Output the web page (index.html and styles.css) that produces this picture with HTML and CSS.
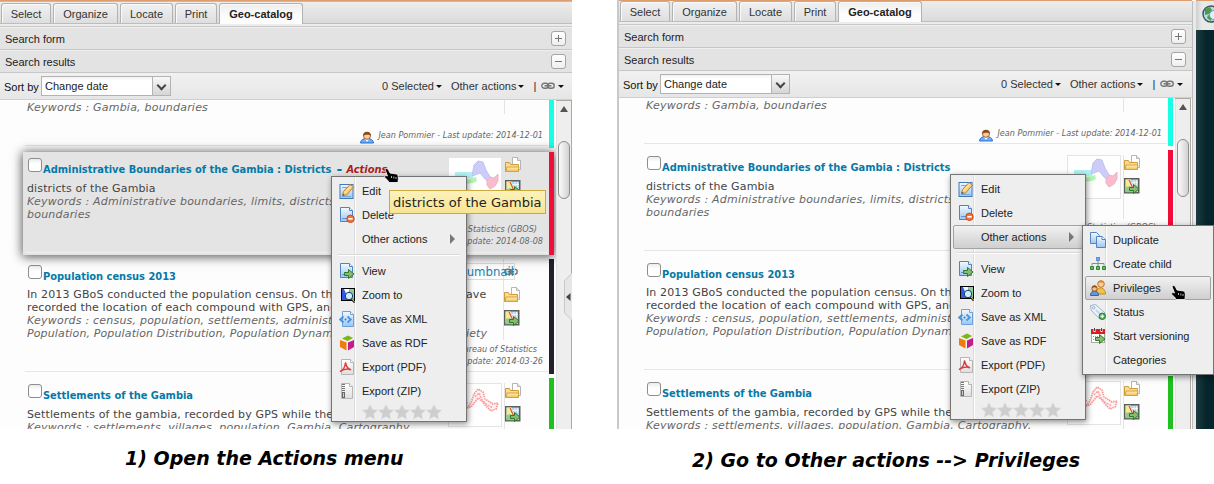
FILE: index.html
```html
<!DOCTYPE html>
<html lang="en">
<head>
<meta charset="utf-8">
<title>Geo-catalog: Actions menu</title>
<link rel="stylesheet" href="styles.css">
</head>
<body>
<svg class="sprite" aria-hidden="true">
  <defs>
    <linearGradient id="gPage" x1="0" y1="0" x2="0" y2="1"><stop offset="0" stop-color="#f4f9ff"/><stop offset="1" stop-color="#9cc6f2"/></linearGradient>
    <linearGradient id="gGrey" x1="0" y1="0" x2="0" y2="1"><stop offset="0" stop-color="#fff"/><stop offset="1" stop-color="#dedede"/></linearGradient>
    <linearGradient id="gFold" x1="0" y1="0" x2="0" y2="1"><stop offset="0" stop-color="#fff3bf"/><stop offset="1" stop-color="#efbf52"/></linearGradient>
  </defs>
  <symbol id="page" viewBox="0 0 16 16"><path d="M1.500.5h9l3 3v11h-12z" fill="url(#gPage)" stroke="#4f83c1"/><path d="M10.500.5v3h3" fill="#fff" stroke="#4f83c1"/><path d="M3 11.500h9" stroke="#5f95d2"/></symbol>
  <symbol id="arrow" viewBox="0 0 16 16"><path d="M5.500 9.500h4v-3l5.500 4.500-5.500 4.500v-3h-4z" fill="#86bd6c" stroke="#2f7a2a"/></symbol>
  <symbol id="edit" viewBox="0 0 16 16"><rect x="1" y="1.500" width="13" height="14" fill="url(#gPage)" stroke="#3f78bd"/><path d="M3 4.500h8M3 13.500h9" stroke="#78a9dd"/><path d="M3.500 12.500l1-4L11 1.500l3.500 2.500-7 8z" fill="#f8cf7c" stroke="#c08038"/><path d="M5.500 10l6.500-7" stroke="#fff0b4"/><path d="M3.500 12.800l.6-2 1.500 1.300z" fill="#444"/></symbol>
  <symbol id="delete" viewBox="0 0 16 16"><use href="#page"/><circle cx="11.500" cy="11.800" r="3.700" fill="#ee7440" stroke="#c84a1a"/><path d="M9.300 11.800h4.400" stroke="#fff" stroke-width="1.600"/></symbol>
  <symbol id="view" viewBox="0 0 16 16"><use href="#page"/><use href="#arrow"/></symbol>
  <symbol id="zoom" viewBox="0 0 16 16"><rect x="2.500" y="1.500" width="13" height="12" fill="#3557e2" stroke="#000"/><path d="M5 2h6L8 9z" fill="#fff"/><path d="M10 2h5v11h-3z" fill="#8fce9a"/><circle cx="10" cy="9" r="3.700" fill="#cdeffa" stroke="#123f66"/><path d="M12.500 12l3.300 3.500" stroke="#222" stroke-width="2"/><path d="M13 12l2.500 2.700" stroke="#e8bd3a"/></symbol>
  <symbol id="xml" viewBox="0 0 16 16"><path d="M3.500.5h8l3 3v12h-11z" fill="url(#gPage)" stroke="#6ba2de"/><path d="M11.500.5v3h3" fill="#fff" stroke="#6ba2de"/><path d="M4.500 5.500L1.200 8.500l3.300 3M8.500 5.500l3.300 3-3.300 3" fill="none" stroke="#4a93dc" stroke-width="1.800"/><circle cx="6.500" cy="8.500" r="1" fill="#2f7fd0"/></symbol>
  <symbol id="rdf" viewBox="0 0 16 16"><path d="M3 3.500l6-3 5 2.500-5.500 3z" fill="#7cb518"/><path d="M1 5l6.500 2.500v8L1 12z" fill="#f07c0c"/><path d="M9 7.500L15 5v7l-6 3.500z" fill="#c41c8c"/></symbol>
  <symbol id="pdf" viewBox="0 0 16 16"><path d="M2.500.5h9l3 3v12h-12z" fill="url(#gGrey)" stroke="#b5b5b5"/><path d="M11.500.5v3h3" fill="#fff" stroke="#b5b5b5"/><path d="M1 12.500c3-1 5-4.500 5.500-9 1 5 3 7 5.500 7.200-3-1.200-7-.6-11 1.800z" fill="none" stroke="#df3a3a" stroke-width="1.400"/></symbol>
  <symbol id="zip" viewBox="0 0 16 16"><path d="M2.500.5h8l3 3v12h-11z" fill="url(#gGrey)" stroke="#b5b5b5"/><path d="M10.500.5v3h3" fill="#fff" stroke="#b5b5b5"/><path d="M4.500 1v9" stroke="#777" stroke-width="3" stroke-dasharray="1 1"/><rect x="3.500" y="9.500" width="2" height="5" fill="#ccc" stroke="#666"/></symbol>
  <symbol id="copy" viewBox="0 0 16 16"><path d="M.5.500h6l3 3v8h-9z" fill="url(#gPage)" stroke="#4f83c1"/><path d="M6.500 4.500h5.500l3.500 3v8h-9z" fill="url(#gPage)" stroke="#4f83c1"/><path d="M12 4.500v3h3.500" fill="#fff" stroke="#4f83c1"/></symbol>
  <symbol id="tree" viewBox="0 0 16 16"><rect x="6.500" y="1.500" width="3" height="3" fill="#6da5e6" stroke="#6094d8"/><path d="M8 5v5M2 9.500V7.500h12v2" fill="none" stroke="#8a8a8a"/><path d="M.5 10.500h3v3h-3zM6.500 10.500h3v3h-3zM12.500 10.500h3v3h-3z" fill="#66b866" stroke="#2b8a2b"/></symbol>
  <symbol id="people" viewBox="0 0 16 16"><path d="M6 14c0-4 2-6 4.500-6s5 2 5 6z" fill="#f2c24a" stroke="#c08a22"/><circle cx="11" cy="4" r="3.300" fill="#f8cf9c" stroke="#b9752b"/><path d="M7.800 3.500C8-.5 14-.5 14.200 3.500 12.500 2 9.500 2 7.800 3.500z" fill="#d98d2b"/><path d="M.5 15.500c0-3 1.500-4.500 4-4.500s4 1.500 4 4.500z" fill="#5f98dc" stroke="#3465a4"/><circle cx="4.500" cy="8.500" r="2.700" fill="#f3c08d" stroke="#9b5a25"/><path d="M2 8C2 4.500 7 4.500 7 8 5.500 7 3.500 7 2 8z" fill="#8c4a1c"/></symbol>
  <symbol id="tag" viewBox="0 0 16 16"><path d="M.5 1.500L5.500.500 15 9l-5.500 6L1 6z" fill="#e9f2fc" stroke="#9fb3cc"/><circle cx="3.700" cy="3.700" r="1.200" fill="#fff" stroke="#92a8c4"/><path d="M6 6l4 4" stroke="#c7d7ea" stroke-width="2"/><circle cx="12.300" cy="12.300" r="3.200" fill="#5fb566" stroke="#24782c"/><path d="M10.500 12.300H14M12.300 10.500V14" stroke="#fff"/></symbol>
  <symbol id="cal" viewBox="0 0 16 16"><rect x="1.500" y="1.500" width="13" height="13" fill="#fff" stroke="#aaa"/><path d="M1 1h14v5H1z" fill="#df1c1c"/><path d="M4.500 0v4M11.500 0v4" stroke="#fff" stroke-width="2"/><path d="M4.500 0v3M11.500 0v3" stroke="#444"/><path d="M3 8.500h5M3 11.500h3" stroke="#999" stroke-dasharray="1 1"/><use href="#arrow"/></symbol>
  <symbol id="folder" viewBox="0 0 16 16"><path d="M7.500.5h5l3 3v9h-8z" fill="#fff" stroke="#b5b5b5"/><path d="M12.500.5v3h3" fill="#eee" stroke="#b5b5b5"/><path d="M.5 14.500v-9h4l1 2h8v7z" fill="#f8dc92" stroke="#cf9a3a"/><path d="M1 14.500l1-4.500h12l-1 4.500z" fill="url(#gFold)" stroke="#d7a03f"/></symbol>
  <symbol id="map" viewBox="0 0 16 16"><rect x=".75" y=".75" width="14" height="14" fill="#b3d3ee" stroke="#5b6058" stroke-width="1.500"/><path d="M1.500 1.500h4.500l1 6-5.500 5z" fill="#f2ec8a"/><path d="M1.500 9l5-1 3 6.200h-8z" fill="#93c98c"/><path d="M5 2l5 11" stroke="#fff" stroke-width="2.600"/><path d="M5 2l4 8.500" stroke="#e0602c" stroke-width="1.500"/><path d="M10 2v5M12.500 2v5M8 4.500h6" stroke="#fff" stroke-width=".7"/><use href="#arrow"/></symbol>
  <symbol id="user" viewBox="0 0 14 13"><path d="M.5 12c.5-3.500 3-4.500 6.500-4.500s6 1 6.500 4.500z" fill="#6cb0fb" stroke="#2b6fd4"/><path d="M5 8l2 3 2-3z" fill="#fff"/><circle cx="7" cy="4.800" r="3.500" fill="#f8cfa0" stroke="#a8662c"/><path d="M3 5C2.800-.8 11.200-.8 11 5 9.500 3 5 3.500 3 5z" fill="#8f4a17"/></symbol>
  <symbol id="link" viewBox="0 0 14 8"><rect x=".8" y="1.300" width="6.500" height="5" rx="2.500" fill="none" stroke="#777" stroke-width="1.400"/><rect x="6.700" y="1.300" width="6.500" height="5" rx="2.500" fill="none" stroke="#777" stroke-width="1.400"/><path d="M3.500 3.800h7" stroke="#777" stroke-width="1.500"/></symbol>
  <symbol id="hand" viewBox="0 0 15 16"><path d="M1 1.500C2-.2 4 .5 4.500 2l1.500 3 6.500 1c1.200.5 2 2 1.800 4.500L14 14.500H5L3.500 12 .700 9.500C0 8 1.500 7 3.500 8z" fill="#000" stroke="#fff" stroke-width=".8"/><path d="M7.500 8v2M9.800 8.500v2M12 9v2" stroke="#ddd" stroke-width=".8"/></symbol>
  <symbol id="star" viewBox="0 0 16 16"><path d="M8 .8l2.200 4.800 5.300.600-4 3.600 1.100 5.200L8 12.400 3.400 15l1.100-5.200-4-3.600 5.300-.6z" fill="#cecece" stroke="#d9d9d9" stroke-width=".6"/></symbol>
  <symbol id="thumbA" viewBox="0 0 52 42"><path d="M6 14h19l-1 6-18 1z" fill="#b0f2f4"/><path d="M9 23l14-3 4-1 1 4-4 2-8 1-6-1z" fill="#b4f5b4"/><path d="M23 18l2-11 4-4 5 1 3 8 3 5 4 6-3 2-5-4-5-6-5 2z" fill="#ccccf8" stroke="#c2c2f2"/><path d="M38 22l3-3 4 1 4-4v7l-3 5-5 3-3-4z" fill="#f8bccf" stroke="#f3b0c6"/></symbol>
  <symbol id="thumbB" viewBox="0 0 52 42"><path d="M18 24l4-5 3-9 4-5 5 3 2 7 5 3 3 2 5-1-2 6-5 2-5-5-4-5-4-3-3 4-4 5z" fill="#fff3f3" stroke="#f99a9a" stroke-width="1.800" stroke-dasharray="1.500 .8"/><path d="M4 22l7-4 8 1M5 25l8-3 7 1" fill="none" stroke="#f9abab" stroke-width="1.500" stroke-dasharray="2 1"/><path d="M26 13l4-4 3 7 5 5 6 3" fill="none" stroke="#f9a4a4" stroke-width="1.500" stroke-dasharray="2 1"/></symbol>
</svg>

<main class="steps">
<section class="step">
  <div class="shot shot-a">
    <div class="catalog">
      <div class="wood"></div>
      <nav class="tabs"><span class="tab t-select">Select</span><span class="tab t-organize">Organize</span><span class="tab t-locate">Locate</span><span class="tab t-print">Print</span><span class="tab active">Geo-catalog</span></nav>
      <div class="gutter"></div>
      <div class="section">Search form<i class="toggle plus"></i></div>
      <div class="section">Search results<i class="toggle"></i></div>
      <div class="toolbar"><label>Sort by</label><span class="select">Change date<i class="trigger"></i></span><span class="tool selected">0 Selected</span><span class="tool other">Other actions</span><b class="pipe">|</b><span class="tool links"><svg width="14" height="8"><use href="#link"/></svg></span></div>
      <div class="results">
        <div class="list">
          <article class="item cyan first">
            <div class="top"><div class="main"><p class="kw">Keywords : Gambia, boundaries</p></div><div class="tools"></div></div>
            <div class="meta"><svg width="14" height="13"><use href="#user"/></svg><span>Jean Pommier - Last update: 2014-12-01</span></div>
          </article>
          <article class="item red hover">
            <div class="top"><div class="main"><h3><i class="check"></i><span>Administrative Boundaries of the Gambia : Districts</span><b class="dash">-</b><em>Actions</em></h3><p>districts of the Gambia</p><p class="kw">Keywords : Administrative boundaries, limits, districts,<br>boundaries</p></div><svg class="thumb" width="54" height="44"><use href="#thumbA"/></svg><div class="tools"><svg width="16" height="16"><use href="#folder"/></svg><svg width="16" height="16"><use href="#map"/></svg></div></div>
            <div class="meta two"><span class="org">Bureau of Statistics (GBOS)</span><span>Last update: 2014-08-08</span></div>
          </article>
          <article class="item black">
            <div class="top"><div class="main wide"><h3><i class="check"></i><span>Population census 2013</span></h3><p class="split"><span>In 2013 GBoS conducted the population census. On the</span><span>ave</span></p><p>recorded the location of each compound with GPS, and</p><p class="kw">Keywords : census, population, settlements, administra</p><p class="kw tight split"><span>Population, Population Distribution, Population Dynamic</span><span>iety</span></p></div><div class="tools with-link"><svg class="lk" width="14" height="8"><use href="#link"/></svg><svg width="16" height="16"><use href="#folder"/></svg><svg width="16" height="16"><use href="#map"/></svg></div></div>
            <span class="alt">thumbnail</span>
            <div class="meta two"><span class="org">Bureau of Statistics</span><span>Last update: 2014-03-26</span></div>
          </article>
          <article class="item green">
            <div class="top"><div class="main"><h3><i class="check"></i><span>Settlements of the Gambia</span></h3><p>Settlements of the gambia, recorded by GPS while the</p><p class="kw">Keywords : settlements, villages, population, Gambia, Cartography,</p></div><svg class="thumb" width="54" height="44"><use href="#thumbB"/></svg><div class="tools"><svg width="16" height="16"><use href="#folder"/></svg><svg width="16" height="16"><use href="#map"/></svg></div></div>
          </article>
        </div>
        <div class="scroll"><i class="up"></i><i class="handle"></i></div>
      </div>
    </div>
    <svg class="collapse" width="9" height="50" viewBox="0 0 9 50"><path d="M9 0L.5 9v32L9 49z" fill="#e6e6e6" stroke="#c9c9c9"/><path d="M6.500 21v8L2 25z" fill="#444"/></svg>
    <div class="menu actions">
      <div class="entry"><svg width="16" height="16"><use href="#edit"/></svg>Edit</div>
      <div class="entry"><svg width="16" height="16"><use href="#delete"/></svg>Delete</div>
      <div class="entry parent"><i class="blank"></i>Other actions</div>
      <hr>
      <div class="entry"><svg width="16" height="16"><use href="#view"/></svg>View</div>
      <div class="entry"><svg width="16" height="16"><use href="#zoom"/></svg>Zoom to</div>
      <div class="entry"><svg width="16" height="16"><use href="#xml"/></svg>Save as XML</div>
      <div class="entry"><svg width="16" height="16"><use href="#rdf"/></svg>Save as RDF</div>
      <div class="entry"><svg width="16" height="16"><use href="#pdf"/></svg>Export (PDF)</div>
      <div class="entry"><svg width="16" height="16"><use href="#zip"/></svg>Export (ZIP)</div>
      <div class="stars"><svg width="16" height="16"><use href="#star"/></svg><svg width="16" height="16"><use href="#star"/></svg><svg width="16" height="16"><use href="#star"/></svg><svg width="16" height="16"><use href="#star"/></svg><svg width="16" height="16"><use href="#star"/></svg></div>
    </div>
    <div class="tooltip">districts of the Gambia</div>
    <svg class="cursor c-a" width="15" height="16"><use href="#hand"/></svg>
  </div>
  <p class="caption cap-a">1) Open the Actions menu</p>
</section>

<section class="step">
  <div class="shot shot-b">
    <div class="catalog">
      <div class="wood"></div>
      <nav class="tabs"><span class="tab t-select">Select</span><span class="tab t-organize">Organize</span><span class="tab t-locate">Locate</span><span class="tab t-print">Print</span><span class="tab active">Geo-catalog</span></nav>
      <div class="gutter"></div>
      <div class="section">Search form<i class="toggle plus"></i></div>
      <div class="section">Search results<i class="toggle"></i></div>
      <div class="toolbar"><label>Sort by</label><span class="select">Change date<i class="trigger"></i></span><span class="tool selected">0 Selected</span><span class="tool other">Other actions</span><b class="pipe">|</b><span class="tool links"><svg width="14" height="8"><use href="#link"/></svg></span></div>
      <div class="results">
        <div class="list">
          <article class="item cyan first">
            <div class="top"><div class="main"><p class="kw">Keywords : Gambia, boundaries</p></div><div class="tools"></div></div>
            <div class="meta"><svg width="14" height="13"><use href="#user"/></svg><span>Jean Pommier - Last update: 2014-12-01</span></div>
          </article>
          <article class="item red">
            <div class="top"><div class="main"><h3><i class="check"></i><span>Administrative Boundaries of the Gambia : Districts</span></h3><p>districts of the Gambia</p><p class="kw">Keywords : Administrative boundaries, limits, districts,<br>boundaries</p></div><svg class="thumb" width="54" height="44"><use href="#thumbA"/></svg><div class="tools"><svg width="16" height="16"><use href="#folder"/></svg><svg width="16" height="16"><use href="#map"/></svg></div></div>
            <div class="meta two"><span class="org">Bureau of Statistics (GBOS)</span><span>Last update: 2014-08-08</span></div>
          </article>
          <article class="item black">
            <div class="top"><div class="main wide"><h3><i class="check"></i><span>Population census 2013</span></h3><p>In 2013 GBoS conducted the population census. On the</p><p>recorded the location of each compound with GPS, and</p><p class="kw">Keywords : census, population, settlements, administra</p><p class="kw tight">Population, Population Distribution, Population Dynamic</p></div></div>
          </article>
          <article class="item green">
            <div class="top"><div class="main"><h3><i class="check"></i><span>Settlements of the Gambia</span></h3><p>Settlements of the gambia, recorded by GPS while the</p><p class="kw">Keywords : settlements, villages, population, Gambia, Cartography,</p></div><svg class="thumb" width="54" height="44"><use href="#thumbB"/></svg><div class="tools"><svg width="16" height="16"><use href="#folder"/></svg><svg width="16" height="16"><use href="#map"/></svg></div></div>
          </article>
        </div>
        <div class="scroll"><i class="up"></i><i class="handle"></i></div>
      </div>
    </div>
    <div class="splitter"></div>
    <div class="mapside"><div class="maptools"><svg width="18" height="18" viewBox="0 0 18 18"><circle cx="9" cy="9" r="8" fill="#b9dcea" stroke="#345a5a" stroke-width="1.500"/><path d="M3 4l5-2 2 3-3 4-4 1zM6 10l4 2-1 4-4-3z" fill="#4f9a4a"/><circle cx="12" cy="10" r="4.500" fill="#d9f3fd" stroke="#5aa0c0"/></svg></div></div>
    <div class="menu actions">
      <div class="entry"><svg width="16" height="16"><use href="#edit"/></svg>Edit</div>
      <div class="entry"><svg width="16" height="16"><use href="#delete"/></svg>Delete</div>
      <div class="entry parent on"><i class="blank"></i>Other actions</div>
      <hr>
      <div class="entry"><svg width="16" height="16"><use href="#view"/></svg>View</div>
      <div class="entry"><svg width="16" height="16"><use href="#zoom"/></svg>Zoom to</div>
      <div class="entry"><svg width="16" height="16"><use href="#xml"/></svg>Save as XML</div>
      <div class="entry"><svg width="16" height="16"><use href="#rdf"/></svg>Save as RDF</div>
      <div class="entry"><svg width="16" height="16"><use href="#pdf"/></svg>Export (PDF)</div>
      <div class="entry"><svg width="16" height="16"><use href="#zip"/></svg>Export (ZIP)</div>
      <div class="stars"><svg width="16" height="16"><use href="#star"/></svg><svg width="16" height="16"><use href="#star"/></svg><svg width="16" height="16"><use href="#star"/></svg><svg width="16" height="16"><use href="#star"/></svg><svg width="16" height="16"><use href="#star"/></svg></div>
    </div>
    <div class="menu submenu">
      <div class="entry"><svg width="16" height="16"><use href="#copy"/></svg>Duplicate</div>
      <div class="entry"><svg width="16" height="16"><use href="#tree"/></svg>Create child</div>
      <div class="entry on"><svg width="16" height="16"><use href="#people"/></svg>Privileges</div>
      <div class="entry"><svg width="16" height="16"><use href="#tag"/></svg>Status</div>
      <div class="entry"><svg width="16" height="16"><use href="#cal"/></svg>Start versioning</div>
      <div class="entry"><i class="blank"></i>Categories</div>
    </div>
    <svg class="cursor c-b" width="15" height="16"><use href="#hand"/></svg>
  </div>
  <p class="caption cap-b">2) Go to Other actions --&gt; Privileges</p>
</section>
</main>
</body>
</html>
```
FILE: styles.css
```css
* { box-sizing: border-box; }
body { margin: 0; background: #fff; color: #222; font: 11px/14px "Liberation Sans", Arial, sans-serif; overflow: hidden; }
svg { display: block; flex: none; }
p, h3 { margin: 0; }
i { font-style: normal; }
.sprite { position: absolute; width: 0; height: 0; }

.steps { display: flex; gap: 45px; width: 1214px; height: 484px; }
.step { flex: none; }
.shot { position: relative; height: 429px; overflow: hidden; display: flex; }
.shot-a { width: 572px; }
.shot-b { width: 597px; }
.shot-b .catalog { border-left: 2px solid #c9c9c9; width: 575px; }
.catalog { display: flex; flex-direction: column; width: 572px; height: 429px; white-space: nowrap; }

.wood { height: 2px; flex: none; background: linear-gradient(#dc9e6e 50%, #d0b8a4 50%); }
.shot-b .wood { height: 1px; background: #dc9e6e; }

.tabs { display: flex; align-items: flex-end; gap: 2px; height: 22px; flex: none; padding-left: 1px; border-bottom: 1px solid #bdbdbd; background: linear-gradient(#ededed, #dadada); }
.shot-b .tabs { height: 21px; }
.tab { height: 20px; padding-top: 3px; text-align: center; border: 1px solid #b2b2b2; border-bottom: 0; border-radius: 3px 3px 0 0; background: linear-gradient(#f1f1f1, #dedede); color: #333; box-shadow: inset 1px 1px #fafafa; }
.t-select { width: 50px; }
.t-organize { width: 65px; }
.t-locate { width: 53px; }
.t-print { width: 42px; }
.tab.active { width: 84px; height: 21px; margin: 0 0 -1px 0; background: linear-gradient(#eee, #fcfcfc 60%); font-weight: bold; color: #222; }

.gutter { height: 3px; flex: none; background: #ececec; border-bottom: 1px solid #c9c9c9; }
.section { display: flex; justify-content: space-between; align-items: center; height: 23px; flex: none; padding: 1px 6px 0 5px; background: #e3e3e3; border-bottom: 1px solid #c6c6c6; box-shadow: inset 0 1px #efefef; }
.toggle { width: 15px; height: 15px; border: 1px solid #a5a5a5; border-radius: 3px; background: linear-gradient(#777, #777) center / 7px 1px no-repeat, linear-gradient(#fff, #efefef); }
.toggle.plus { background: linear-gradient(#777, #777) center / 7px 1px no-repeat, linear-gradient(#777, #777) center / 1px 7px no-repeat, linear-gradient(#fff, #efefef); }

.toolbar { display: flex; align-items: center; height: 27px; flex: none; padding-left: 4px; background: linear-gradient(#f1f1f1, #e6e6e6); border-bottom: 1px solid #cfcfcf; color: #333; }
.toolbar label { width: 37px; padding-top: 1px; color: #111; }
.select { display: flex; justify-content: space-between; align-items: center; width: 130px; height: 20px; padding-left: 3px; border: 1px solid #b3b3b3; background: linear-gradient(#f2f2f2, #fff 4px); color: #222; line-height: 16px; }
.trigger { width: 18px; height: 18px; border-left: 1px solid #b3b3b3; background: linear-gradient(#f8f8f8, #d5d5d5); display: grid; place-items: center; }
.trigger::after { content: ""; width: 5px; height: 5px; border: solid #444; border-width: 0 2px 2px 0; transform: translateY(-1px) rotate(45deg); }
.tool { display: flex; align-items: center; gap: 2px; }
.tool::after { content: ""; border: 3px solid transparent; border-top-color: #111; border-bottom: 0; }
.tool.links { gap: 3px; }
.selected { margin-left: 211px; }
.other { margin-left: 9px; }
.pipe { margin-left: 9px; width: 8px; color: #223; font-weight: normal; }

.results { display: flex; flex: 1; min-height: 0; background: #fdfdfd; }
.list { width: 556px; padding-left: 23px; overflow: hidden; flex: none; }
.item { position: relative; display: flex; flex-direction: column; justify-content: space-between; width: 531px; margin-bottom: 4px; border-right: 5px solid; }
.item::after { content: ""; position: absolute; left: 2px; right: 1px; bottom: 2px; height: 1px; background: #e6e6e6; }
.cyan { border-color: #18ffe6; height: 48px; }
.red { border-color: #f20c38; height: 103px; }
.black { border-color: #252129; height: 115px; }
.green { border-color: #20c020; height: 115px; }
.hover { background: #e4e4e4; box-shadow: 0 1px 10px 1px rgba(0, 0, 0, .65); z-index: 1; }
.hover::after { background: #efefef; }

.top { display: flex; }
.main { width: 425px; padding-left: 4px; color: #444; font: 11px/13px "DejaVu Sans", sans-serif; letter-spacing: .13px; }
.main.wide { width: 481px; }
.kw { font-style: italic; color: #666; letter-spacing: .21px; }
.kw.tight { letter-spacing: .13px; }
.main h3 { display: flex; align-items: flex-start; height: 30px; padding: 6px 0 0 1px; gap: 1px; font: bold 11px/14px "DejaVu Sans Condensed", "DejaVu Sans", sans-serif; font-stretch: condensed; letter-spacing: 0; color: #0679a8; }
.black .main h3 { height: 29px; }
.main h3 span { padding-top: 5px; letter-spacing: -.01px; }
.main h3 .dash { width: 7px; margin: 4px 2px 0 4px; font: bold 14px/14px "DejaVu Sans", sans-serif; }
.main h3 em { padding-top: 5px; color: #a92020; }
.check { width: 14px; height: 14px; border: 1px solid #8e8e8e; border-radius: 3px; background: linear-gradient(#ececec, #fff 5px); }
.split { display: flex; }
.split span:first-child { width: 439px; }

.thumb { margin-top: 5px; border: 1px solid #e4e4e4; background: #fff; }
.tools { margin: 5px 0 0 2px; border-left: 1px solid #e4e4e4; height: 64px; display: flex; flex-direction: column; gap: 7px; }
.first .tools { margin: 0 0 0 56px; height: 14px; }
.first .kw { padding-top: 1px; }
.with-link { margin: 0 0 0 -1px; height: 81px; padding-top: 9px; }
.with-link .lk { margin-bottom: 4px; }
.alt { position: absolute; right: 34px; top: 4px; height: 17px; border: 1px solid #ddd; font: 13px/15px "DejaVu Sans Condensed", sans-serif; font-stretch: condensed; color: #1584b2; }

.meta { display: flex; justify-content: flex-end; gap: 4px; padding: 0 6px 4px 0; color: #666; font: italic 9px/12px "DejaVu Sans Condensed", "DejaVu Sans", sans-serif; font-stretch: condensed; }
.meta span { margin-top: -2px; }
.meta.two { display: grid; justify-items: end; gap: 0; padding-bottom: 8px; grid-auto-rows: 12px; }
.black .meta.two { padding-bottom: 7px; }
.meta.two span { margin: 0; }
.meta .org { padding-right: 6px; }

.scroll { display: flex; flex-direction: column; align-items: center; width: 16px; background: #eee; border: solid #aeaaa1; border-width: 1px 1px 0 0; box-shadow: inset 1px 0 #e2e2e2; }
.up { width: 0; border: 4px solid transparent; border-top: 0; border-bottom: 6px solid #555; margin-top: 5px; }
.handle { width: 12px; height: 58px; margin-top: 29px; border: 1px solid #8d8d8d; border-radius: 6px; background: linear-gradient(90deg, #fafafa, #d2d2d2); }
.collapse { position: absolute; left: 564px; top: 272px; }

.splitter { width: 4px; margin-top: 1px; background: #e9e9e9; border-left: 1px solid #bdbdbd; }
.mapside { width: 18px; background: linear-gradient(90deg, #1f3b42, #06252d 10px); border-top: 1px solid #dc9e6e; }
.maptools { height: 29px; padding: 4px 0 0 6px; overflow: hidden; background: linear-gradient(90deg, #cfcfcf, #e9e9e9 6px); }

.menu { position: absolute; z-index: 2; padding: 2px; border: 1px solid #747474; color: #222; background: linear-gradient(90deg, transparent 22px, #dcdcdc 22px, #dcdcdc 23px, #fff 23px, #fff 24px, transparent 24px), #eee; box-shadow: 1px 2px 6px rgba(0, 0, 0, .45); white-space: nowrap; }
.actions { left: 331px; top: 176px; width: 136px; height: 246px; }
.shot-b .actions { left: 333px; top: 174px; }
.submenu { left: 465px; top: 225px; width: 132px; height: 150px; }
.entry { display: flex; align-items: center; gap: 7px; height: 24px; padding-left: 4px; border: 1px solid transparent; }
.entry.on { border-color: #a3a3a3; border-radius: 2px; background: linear-gradient(#f1f1f1, #cfcfcf); }
.blank { width: 16px; }
.parent::after { content: ""; border: 5px solid transparent; border-left-color: #777; border-right: 0; margin: 0 8px 0 auto; }
.menu hr { height: 2px; margin: 3px 4px; border: 0; background: linear-gradient(#d8d8d8 50%, #fff 50%); }
.stars { display: flex; padding: 1px 0 0 28px; }

.tooltip { position: absolute; z-index: 3; left: 389px; top: 190px; height: 24px; width: 157px; padding-left: 3px; border: 1px solid #cba93a; background: linear-gradient(#fdf2bd, #f9e490); color: #222; font: 13px/23px "DejaVu Sans", sans-serif; white-space: nowrap; }
.cursor { position: absolute; z-index: 4; }
.c-a { left: 384px; top: 168px; }
.c-b { left: 554px; top: 285px; }

.caption { font: italic bold 19px/24px "DejaVu Sans", sans-serif; color: #000; white-space: nowrap; }
.cap-a { padding: 17px 0 0 125px; }
.cap-b { padding: 19px 0 0 75px; }
```
